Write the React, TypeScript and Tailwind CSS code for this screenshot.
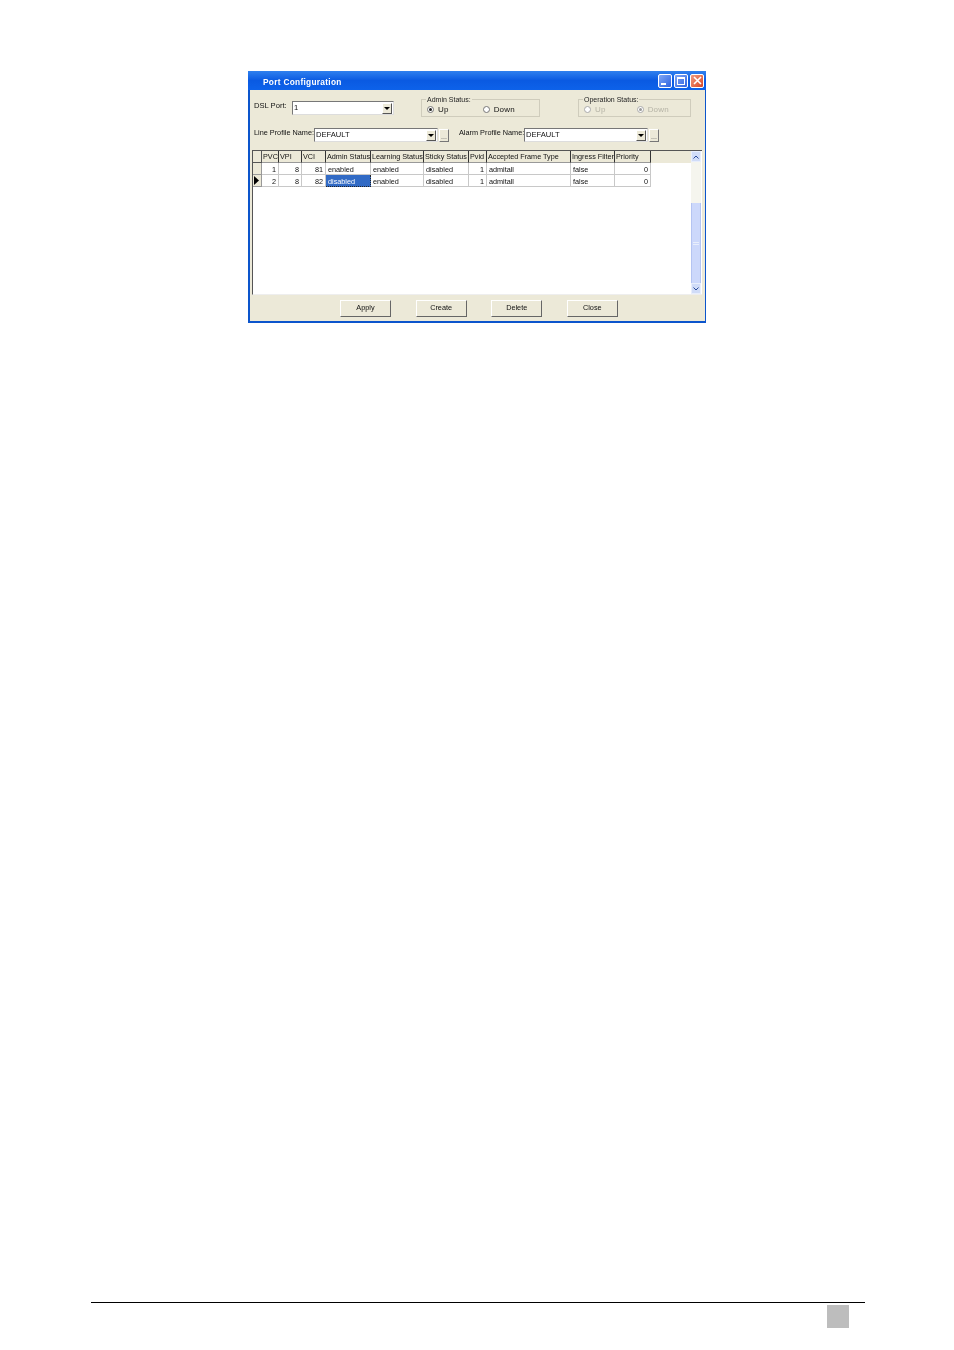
const columns = [
  { title: "PVC", align: "text-center" },
  { title: "VPI", align: "text-left" },
  { title: "VCI", align: "text-left" },
  { title: "Admin Status", align: "text-left" },
  { title: "Learning Status", align: "text-left" },
  { title: "Sticky Status", align: "text-left" },
  { title: "Pvid", align: "text-left" },
  { title: "Accepted Frame Type", align: "text-left" },
  { title: "Ingress Filter", align: "text-left" },
  { title: "Priority", align: "text-left" },
];

const rows = [
  ["1", "8", "81", "enabled", "enabled", "disabled", "1", "admitall", "false", "0"],
  ["2", "8", "82", "disabled", "enabled", "disabled", "1", "admitall", "false", "0"],
];

const numeric = [0, 1, 2, 6, 9];
const gridCols = "grid grid-cols-[9px_17px_23px_24px_45px_53px_45px_18px_84px_44px_36px]";

const ArrowBtn = () => (
  <div className="w-[10px] h-[11px] bg-[#ece9d8] border border-t-white border-l-white border-r-[#555] border-b-[#555] flex items-center justify-center">
    <svg width="6" height="3" viewBox="0 0 6 3"><path d="M0 0h6L3 3z" fill="#000" /></svg>
  </div>
);

const Combo = ({ value, width }: { value: string; width: string }) => (
  <div className={`${width} h-[14px] bg-white border border-t-[#777] border-l-[#777] border-r-[#ddd] border-b-[#ddd] flex items-center justify-between pl-[1px] pr-[1px] text-[7.6px] text-[#111]`}>
    <span>{value}</span>
    <ArrowBtn />
  </div>
);

const DotsBtn = () => (
  <div className="w-[10px] h-[13px] ml-[1px] bg-[#ece9d8] border border-t-white border-l-white border-r-[#777] border-b-[#777] flex items-end justify-center text-[7px] leading-[9px] text-[#555]">...</div>
);

const Radio = ({ label, checked, disabled }: { label: string; checked?: boolean; disabled?: boolean }) => (
  <div className={`flex items-center gap-[4px] text-[8px] tracking-[0.2px] leading-[9px] ${disabled ? "text-[#b5b3a6]" : "text-[#111]"}`}>
    <span className={`w-[7px] h-[7px] rounded-full border bg-white flex items-center justify-center ${disabled ? "border-[#aaa]" : "border-[#777]"}`}>
      {checked && <span className={`w-[3px] h-[3px] rounded-full ${disabled ? "bg-[#999]" : "bg-[#222]"}`} />}
    </span>
    {label}
  </div>
);

const Group = ({ title, width, gap, up, down, disabled }: { title: string; width: string; gap: string; up?: boolean; down?: boolean; disabled?: boolean }) => (
  <fieldset className={`${width} h-[22px] border border-[#cfccbc] pl-[5px] m-0`}>
    <legend className="text-[7px] leading-[9px] text-[#222] px-[1px] -ml-[1px]">{title}</legend>
    <div className={`flex pt-[1px] ${gap}`}>
      <Radio label="Up" checked={up} disabled={disabled} />
      <Radio label="Down" checked={down} disabled={disabled} />
    </div>
  </fieldset>
);

const TitleBtn = ({ tone, children }: { tone: string; children: React.ReactNode }) => (
  <div className={`w-[14px] h-[14px] rounded-[2px] border border-white flex items-center justify-center bg-gradient-to-br ${tone}`}>{children}</div>
);

const PushBtn = ({ label }: { label: string }) => (
  <div className="w-[51px] h-[17px] bg-[#ece9d8] border border-t-white border-l-white border-r-[#666] border-b-[#666] flex items-center justify-center text-[7.3px] text-[#111]">{label}</div>
);

export default function App() {
  return (
    <div className="w-[954px] h-[1350px] bg-white overflow-hidden font-['Liberation_Sans',Arial,sans-serif]">
      <div className="pt-[71px] pl-[248px] h-[1302px]">
        <div className="w-[458px] h-[252px] bg-[#0c55cc] pl-[2px] pr-[1px] pb-[2px] flex flex-col blur-[0.3px]">
          {/* title bar */}
          <div className="h-[19px] shrink-0 -ml-[2px] -mr-[1px] bg-gradient-to-b from-[#2f80ee] via-[#0a5ae2] to-[#0d62ea] flex items-center justify-between pl-[15px] pr-[2px]">
            <span className="text-white font-bold text-[8.3px] tracking-[0.3px] pt-[3px]">Port Configuration</span>
            <div className="flex gap-[2px]">
              <TitleBtn tone="from-[#7fa6f5] to-[#2f62e0]"><span className="w-[5px] h-[2px] bg-white mt-[7px] mr-[4px]" /></TitleBtn>
              <TitleBtn tone="from-[#7fa6f5] to-[#2f62e0]"><span className="w-[8px] h-[8px] border border-white border-t-2" /></TitleBtn>
              <TitleBtn tone="from-[#ee9a80] to-[#d8431f]">
                <svg width="9" height="9" viewBox="0 0 9 9"><path d="M1 1l7 7M8 1L1 8" stroke="#fff" strokeWidth="1.6" /></svg>
              </TitleBtn>
            </div>
          </div>

          <div className="flex-1 bg-[#ece9d8] flex flex-col pl-[2px] pr-[3px]">
            {/* top row */}
            <div className="flex items-start h-[38px] pl-[2px] pt-[5px] text-[7.6px] text-[#111]">
              <span className="w-[38px] pt-[5px] leading-[11px] whitespace-nowrap">DSL Port:</span>
              <div className="pt-[6px]"><Combo value="1" width="w-[102px]" /></div>
              <div className="ml-[27px]"><Group title="Admin Status:" width="w-[119px]" gap="gap-[34px]" up /></div>
              <div className="ml-[38px]"><Group title="Operation Status:" width="w-[113px]" gap="gap-[31px]" down disabled /></div>
            </div>

            {/* profile row */}
            <div className="flex items-center h-[14px] pl-[2px] text-[7.3px] text-[#111]">
              <span className="w-[60px] -mt-[3px] whitespace-nowrap">Line Profile Name:</span>
              <Combo value="DEFAULT" width="w-[124px]" />
              <DotsBtn />
              <span className="ml-[10px] w-[65px] -mt-[3px] whitespace-nowrap">Alarm Profile Name:</span>
              <Combo value="DEFAULT" width="w-[124px]" />
              <DotsBtn />
            </div>

            {/* grid */}
            <div className="mt-[8px] w-[450px] h-[145px] bg-white border-t border-l border-t-[#555] border-l-[#555] border-b border-b-[#eee] flex text-[7.25px] text-[#111]">
              <div className="w-[438px]">
                <div className={`${gridCols} h-[12px] leading-[11px] bg-[#ece9d8]`}>
                  <div className="border-r border-b border-[#555]" />
                  {columns.map((c) => (
                    <div key={c.title} className={`border-r border-b border-r-[#333] border-b-[#999] pl-[1px] whitespace-nowrap overflow-hidden ${c.align}`}>{c.title}</div>
                  ))}
                </div>
                {rows.map((row, r) => (
                  <div key={r} className={`${gridCols} h-[12px] leading-[13px]`}>
                    <div className="h-[12px] bg-[#ece9d8] border-r border-b border-[#999] flex items-center">
                      {r === 1 && <svg width="6" height="9" viewBox="0 0 6 9"><path d="M1 0l5 4.5L1 9z" fill="#000" /></svg>}
                    </div>
                    {row.map((cell, i) => {
                      const selected = r === 1 && i === 3;
                      return (
                        <div
                          key={i}
                          className={`h-[12px] px-[2px] whitespace-nowrap border-r border-b ${selected ? "bg-[#316ac5] text-white border-[#222] border-dotted" : "border-[#c8c8c8]"} ${numeric.includes(i) ? "text-right" : "text-left"}`}
                        >
                          {cell}
                        </div>
                      );
                    })}
                  </div>
                ))}
              </div>
              {/* scrollbar */}
              <div className="w-[10px] h-[143px] bg-[#f5f5ee] flex flex-col">
                <div className="h-[11px] bg-[#d0dcf8] border border-[#e8eefc] flex items-center justify-center">
                  <svg width="6" height="4" viewBox="0 0 6 4"><path d="M0.5 3.5L3 1l2.5 2.5" stroke="#2a4a9a" fill="none" /></svg>
                </div>
                <div className="h-[41px]" />
                <div className="flex-1 bg-[#ccd8fb] border-x border-[#b4c4f2] flex items-center justify-center">
                  <span className="w-[6px] h-[3px] border-y border-[#e8eefc]" />
                </div>
                <div className="h-[11px] bg-[#d0dcf8] border border-[#e8eefc] flex items-center justify-center">
                  <svg width="6" height="4" viewBox="0 0 6 4"><path d="M0.5 0.5L3 3l2.5-2.5" stroke="#2a4a9a" fill="none" /></svg>
                </div>
              </div>
            </div>

            {/* buttons */}
            <div className="flex mt-[5px] pl-[88px] gap-[24.6px]">
              {["Apply", "Create", "Delete", "Close"].map((b) => <PushBtn key={b} label={b} />)}
            </div>
          </div>
        </div>
      </div>

      {/* footer */}
      <div className="mx-[91px] w-[774px] border-t border-black flex justify-end pt-[2px] pr-[16px]">
        <div className="w-[22px] h-[23px] bg-[#bdbdbd]" />
      </div>
    </div>
  );
}
